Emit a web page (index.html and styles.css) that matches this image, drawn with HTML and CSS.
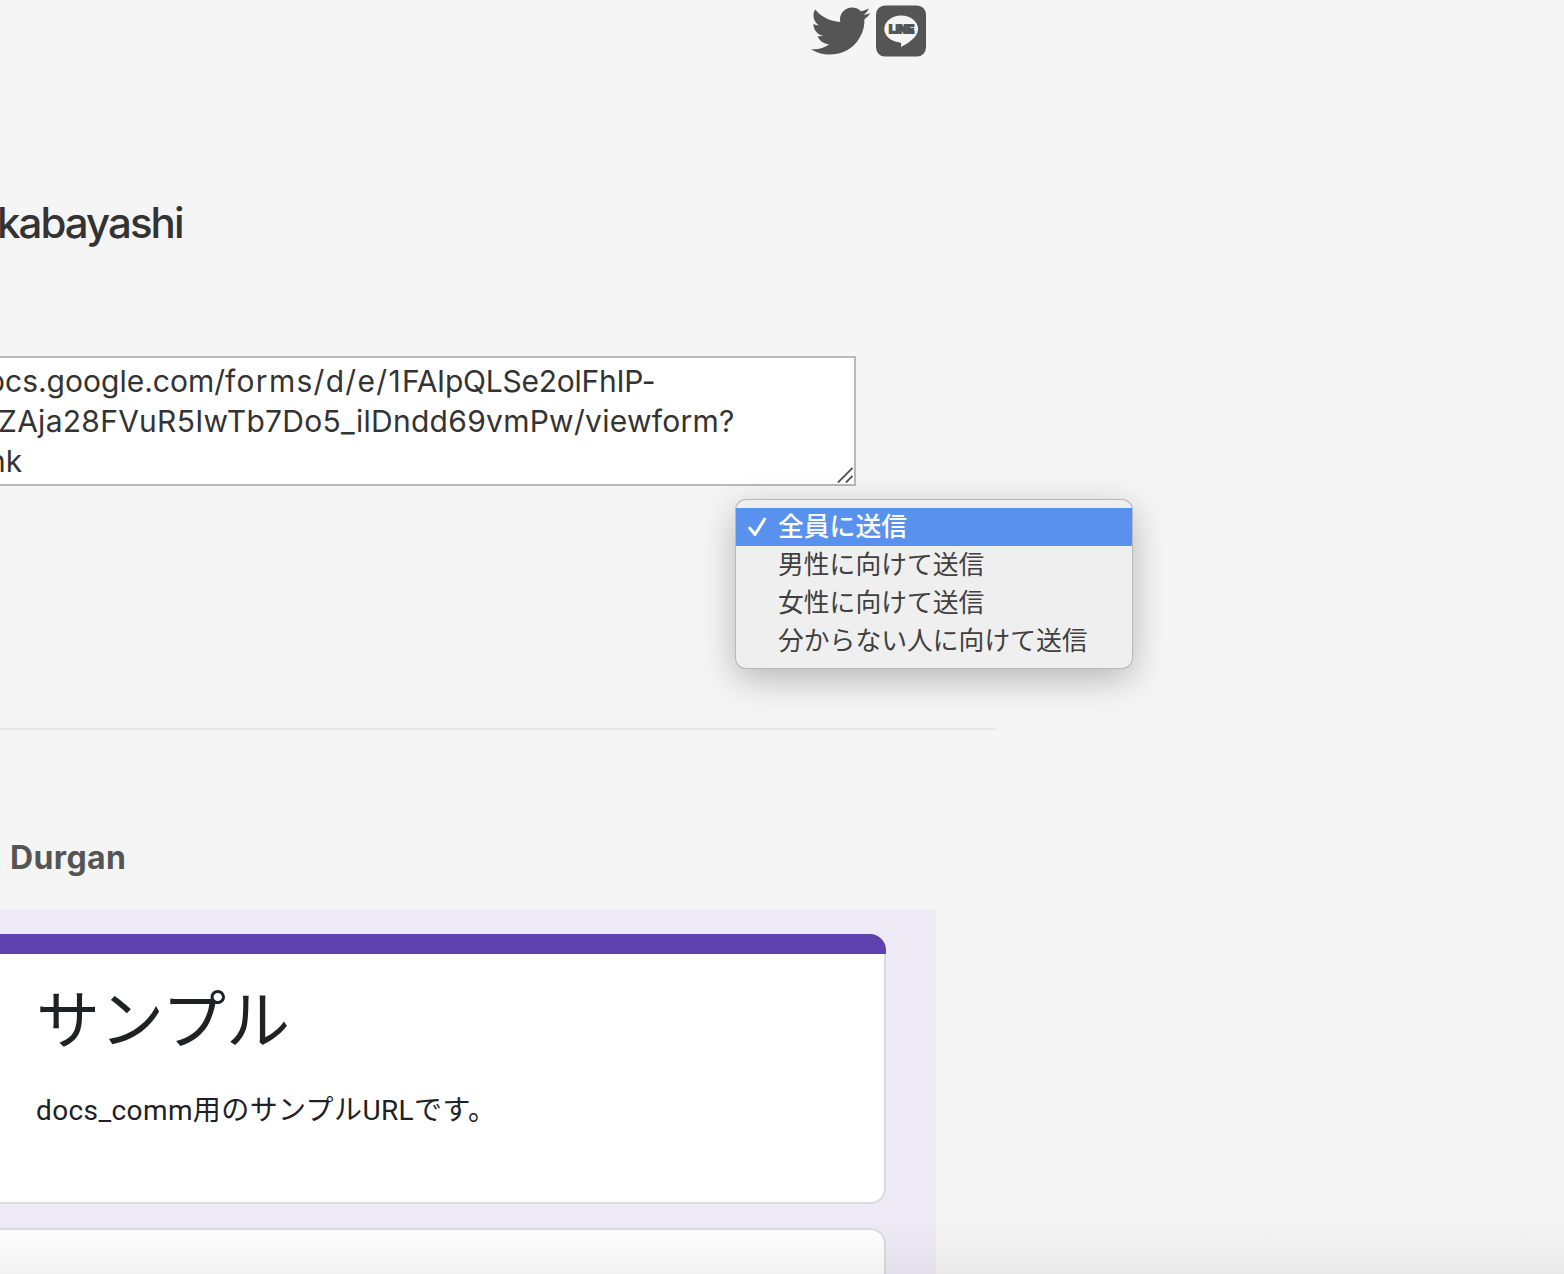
FILE: index.html
```html
<!DOCTYPE html>
<html lang="ja">
<head>
<meta charset="utf-8">
<title>docs_comm</title>
<link rel="stylesheet" href="styles.css">
</head>
<body>
<header class="share">
  <svg class="twitter" viewBox="0 0 512 512" preserveAspectRatio="none" aria-label="Twitter"><path fill="#555" d="M459.37 151.716c.325 4.548.325 9.097.325 13.645 0 138.72-105.583 298.558-298.558 298.558-59.452 0-114.68-17.219-161.137-47.106 8.447.974 16.568 1.299 25.34 1.299 49.055 0 94.213-16.568 130.274-44.832-46.132-.975-84.792-31.188-98.112-72.772 6.498.974 12.995 1.624 19.818 1.624 9.421 0 18.843-1.3 27.614-3.573-48.081-9.747-84.143-51.98-84.143-102.985v-1.299c13.969 7.797 30.214 12.67 47.431 13.319-28.264-18.843-46.781-51.005-46.781-87.391 0-19.492 5.197-37.36 14.294-52.954 51.655 63.675 129.3 105.258 216.365 109.807-1.624-7.797-2.599-15.918-2.599-24.04 0-57.828 46.782-104.934 104.934-104.934 30.213 0 57.502 12.67 76.67 33.137 23.715-4.548 46.456-13.32 66.599-25.34-7.798 24.366-24.366 44.833-46.132 57.827 21.117-2.273 41.584-8.122 60.426-16.243-14.292 20.791-32.161 39.308-52.628 54.253z"/></svg>
  <svg class="line" viewBox="0 0 50 52" aria-label="LINE"><rect y=".4" width="50" height="51.2" rx="9" fill="#555"/><path fill="#f5f5f5" d="M25.2 10.5C16 10.5 8.3 16.600 8.3 24c0 6.900 6.300 12.300 14.800 13.300 2.200.4 2.500 1.300 1.900 4.700 6.500-3.300 17.100-9.700 17.100-18C42.100 16.600 34.500 10.500 25.200 10.500z"/><text x="13" y="28.300" textLength="25" lengthAdjust="spacingAndGlyphs" class="line-word">LINE</text></svg>
</header>
<main class="page">
  <h1 class="name">kabayashi</h1>
  <div class="url-box">
    <span class="url u1">ocs.google.com/<span class="path">forms/d/e/1</span><span class="id">FAIpQLSe2olFhIP-</span></span>
    <span class="url u2">ZAja28FVuR5IwTb7Do5_ilDndd69vmPw/viewform?</span>
    <span class="url u3">nk</span>
    <svg class="grip" viewBox="0 0 16 16"><path d="M1 15.500 15.500 1M9 15.500l6.500-6.500" stroke="#555" stroke-width="1.900"/></svg>
  </div>
  <hr class="rule">
  <h2 class="author">a Durgan</h2>
  <section class="form">
    <article class="card first">
      <div class="card-body">
        <h3 class="form-title">サンプル</h3>
        <p class="form-text">docs_comm用のサンプルURLです。</p>
      </div>
    </article>
    <article class="card second"></article>
  </section>
</main>
<ul class="menu">
  <li class="item selected"><svg class="check" viewBox="0 0 20 20"><path d="M1.700 11 7 17.500 16.700 2" fill="none" stroke="#fff" stroke-width="3" stroke-linecap="round" stroke-linejoin="round"/></svg>全員に送信</li>
  <li class="item">男性に向けて送信</li>
  <li class="item">女性に向けて送信</li>
  <li class="item">分からない人に向けて送信</li>
</ul>
<div class="fade"></div>
</body>
</html>
```
FILE: styles.css
```css
* { box-sizing: border-box; }
body {
  margin: 0;
  height: 1274px;
  position: relative;
  overflow: hidden;
  background: #f5f5f5;
  color: #333;
  font-family: Inter, "Noto Sans CJK JP", sans-serif;
}
.share { display: flex; gap: 6px; width: 926px; height: 66px; justify-content: flex-end; }
.twitter { width: 59.5px; height: 58px; margin-top: 2px; }
.line { width: 50px; height: 52px; margin-top: 5px; }
.line-word { font: 700 10.5px "Liberation Sans", sans-serif; fill: #555; stroke: #555; stroke-width: 1.8px; }
.page { display: flex; flex-direction: column; }
.name {
  margin: 132px 0 0 -3px;
  height: 50px;
  line-height: 50px;
  font-size: 42px;
  font-weight: 500;
  letter-spacing: -1.95px;
  white-space: nowrap;
}
.url-box {
  position: relative;
  width: 858px;
  height: 130px;
  margin: 108px 0 0 -2px;
  padding-top: 3px;
  border: 2px solid #b9b9b9;
  background: #fff;
}
.url { display: block; height: 40px; line-height: 40px; font-size: 30px; white-space: nowrap; }
.u1 { margin-left: -13px; letter-spacing: 0; }
.path { letter-spacing: 1.3px; }
.id { letter-spacing: -.25px; }
.u2 { margin-left: -2px; letter-spacing: .27px; }
.u3 { margin-left: -12px; }
.grip { position: absolute; right: 1px; bottom: 1px; width: 16px; height: 16px; }
.rule { width: 996px; height: 2px; margin: 242px 0 0; border: 0; background: #e6e6e6; }
.author {
  margin: 108px 0 0 -17px;
  height: 40px;
  line-height: 40px;
  font-size: 32px;
  font-weight: 700;
  letter-spacing: .4px;
  color: #555;
  white-space: nowrap;
}
.form {
  width: 936px;
  height: 364px;
  margin-top: 32px;
  padding-top: 24px;
  display: flex;
  flex-direction: column;
  gap: 24px;
  background: #eeebf6;
}
.card { width: 886px; background: #fff; }
.first {
  height: 270px;
  padding-top: 20px;
  border-radius: 0 16px 16px 0;
  background: linear-gradient(#5e41af 20px, #dadce0 20px);
}
.card-body {
  height: 250px;
  padding: 23px 0 0 36px;
  border: solid #dadce0;
  border-width: 0 2px 2px 0;
  border-radius: 0 0 16px 0;
  background: #fff;
}
.second { height: 46px; border: solid #dadce0; border-width: 2px 2px 0 0; border-radius: 0 16px 0 0; }
.form-title {
  margin: 0;
  font: 400 64px/90px Roboto, "Noto Sans CJK JP", sans-serif;
  color: #202124;
}
.form-text {
  margin: 24px 0 0;
  font: 400 28px/40px Roboto, "Noto Sans CJK JP", sans-serif;
  letter-spacing: .4px;
  color: #202124;
}
.menu {
  position: absolute;
  left: 736px;
  top: 500px;
  width: 396px;
  height: 168px;
  margin: 0;
  padding: 8px 0;
  list-style: none;
  border-radius: 10px;
  background: #efefef;
  box-shadow: 0 0 0 1px #b8b8b8, 0 10px 36px rgba(0, 0, 0, .27);
}
.item {
  position: relative;
  height: 38px;
  padding-left: 42px;
  font: 400 25.8px/34px "Noto Sans CJK JP", sans-serif;
  color: #404040;
}
.selected { background: #5991ef; color: #fff; font-weight: 500; }
.check { position: absolute; left: 12px; top: 9px; width: 20px; height: 20px; }
.fade {
  position: absolute;
  left: 0;
  right: 0;
  bottom: 0;
  height: 60px;
  background: linear-gradient(rgba(0, 0, 0, 0), rgba(0, 0, 0, .02) 50%, rgba(0, 0, 0, .05));
}
```
